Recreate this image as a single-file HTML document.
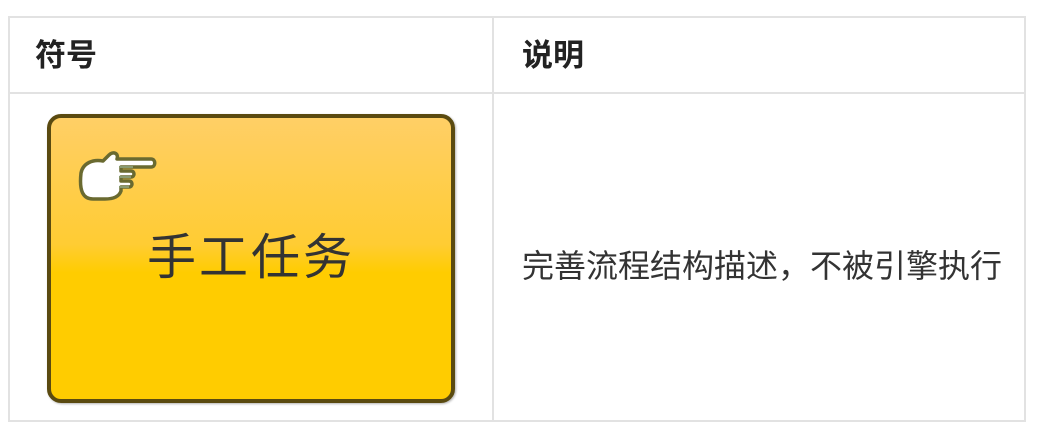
<!DOCTYPE html>
<html><head><meta charset="utf-8"><style>
html,body{margin:0;padding:0;background:#fff;width:1050px;height:434px;overflow:hidden;font-family:"Liberation Sans","Noto Sans CJK SC",sans-serif;}
.t{position:absolute;left:8px;top:16px;width:1018px;height:406px;border:2px solid #e2e2e2;box-sizing:border-box;}
.hl{position:absolute;left:8px;top:92px;width:1018px;height:2px;background:#e2e2e2;}
.vl{position:absolute;left:492px;top:16px;width:2px;height:406px;background:#e2e2e2;}
.h{position:absolute;top:36px;font-size:31px;font-weight:bold;color:#222;line-height:40px;}
.d{position:absolute;left:522px;top:244px;font-size:32px;color:#333;line-height:44px;white-space:nowrap;}
.box{position:absolute;left:47px;top:114px;width:408px;height:289px;box-sizing:border-box;border:4px solid #5a4a10;border-radius:14px;background:linear-gradient(#ffcf66 0%,#ffcc33 45%,#ffcc00 55%,#ffcc00 100%);box-shadow:1px 1px 2px rgba(0,0,0,.3);}
.bt{position:absolute;left:0;right:0;top:112px;text-align:center;font-size:49px;letter-spacing:3px;color:#333;line-height:56px;}
</style></head><body>
<div class="t"></div><div class="hl"></div><div class="vl"></div>
<div class="h" style="left:35px">符号</div>
<div class="h" style="left:522px">说明</div>
<div class="box">
<svg style="position:absolute;left:24px;top:29px" width="82" height="56" viewBox="0 0 82 56">
<path d="M6 26 C8 16 18 12 28 14 L34 8 C38 4 44 6 42 12 L76 12 C81 12 81 20 76 20 L46 20 L46 24 L56 24 C60 24 60 30 56 30 L46 30 L46 34 L54 34 C58 34 58 40 54 40 L46 40 L46 44 C44 50 38 52 30 52 L18 52 C8 52 4 44 6 26 Z" fill="#fff" stroke="#6a6a30" stroke-width="3.5" stroke-linejoin="round"/>
<path d="M44 20 L58 20 M44 30 L56 30 M44 40 L54 40" stroke="#8a9a70" stroke-width="2"/>
</svg>
<div class="bt">手工任务</div>
</div>
<div class="d">完善流程结构描述，不被引擎执行</div>
</body></html>
